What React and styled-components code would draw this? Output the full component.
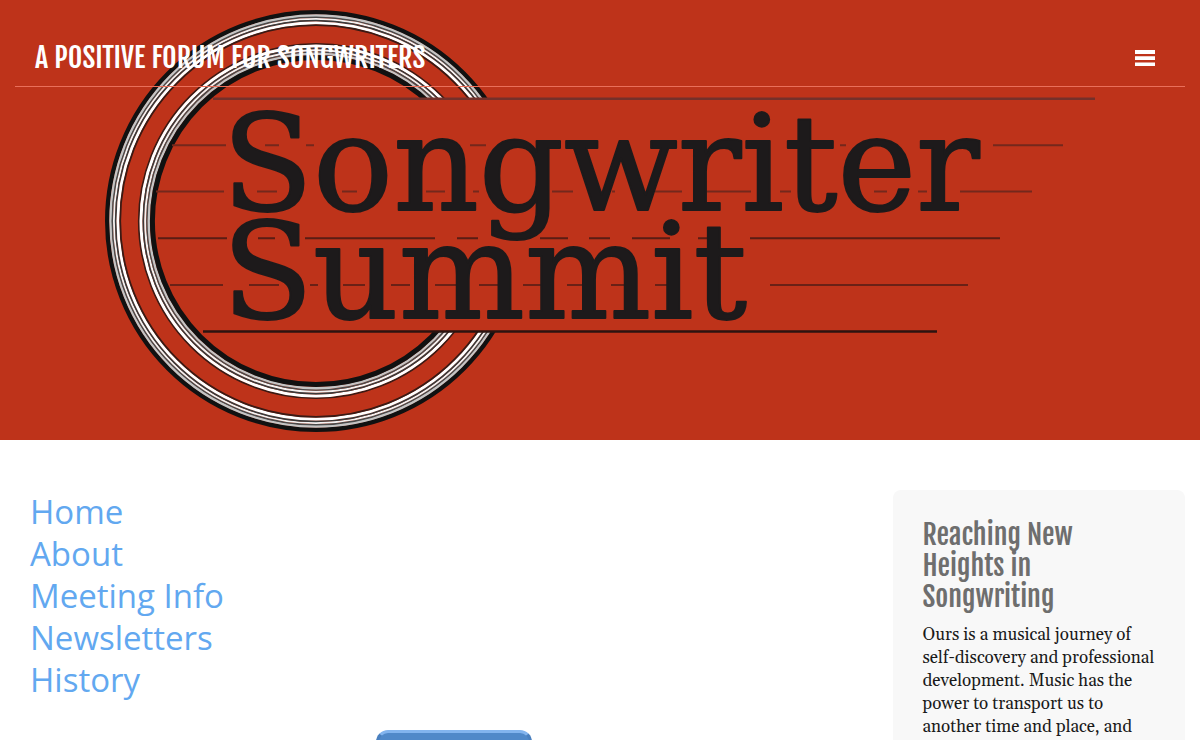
import React from 'react'
import styled, { createGlobalStyle } from 'styled-components'

const GlobalStyle = createGlobalStyle`
  * {
    box-sizing: border-box;
  }
  body {
    margin: 0;
    background: #fff;
    font-family: Gelasio, Georgia, "Liberation Serif", serif;
  }
`

const Hero = styled.header`
  display: grid;
  background: #be331a;
`

const Logo = styled.svg`
  grid-area: 1 / 1;
  display: block;
  width: 100%;
  height: auto;
`

const LogoText = styled.text`
  font-family: "DejaVu Serif", serif;
  font-size: 133px;
  fill: #1d1a1b;
  stroke: #1d1a1b;
  stroke-width: 2px;
  stroke-linejoin: round;
`

const TopBar = styled.div`
  grid-area: 1 / 1;
  align-self: start;
  display: flex;
  justify-content: space-between;
  align-items: center;
  margin: 0 15px;
  padding: 29px 20px 0;
  height: 87px;
  border-bottom: 1px solid #ea6f5a;
`

const Title = styled.h1`
  margin: 0;
  font-family: "Fjalla One", "Roboto Condensed", "Liberation Sans Narrow", sans-serif;
  font-size: 28px;
  line-height: 36px;
  font-weight: 400;
  text-transform: uppercase;
  white-space: nowrap;
  color: #fff;
`

const MenuButton = styled.button`
  display: block;
  padding: 10px;
  border: 0;
  background: none;
  color: #fff;
  cursor: pointer;

  svg {
    display: block;
  }
`

const Main = styled.main`
  display: grid;
  grid-template-columns: minmax(0, 3fr) minmax(0, 1fr);
  padding: 50px 15px 0;
`

const Content = styled.div`
  display: flex;
  flex-direction: column;
  padding: 0 15px;
`

const Menu = styled.nav`
  display: flex;
  flex-direction: column;
  align-items: flex-start;
  padding-top: 1px;
`

const MenuLink = styled.a`
  font-family: "Segoe UI", "Open Sans", "Noto Sans", sans-serif;
  font-size: 33px;
  line-height: 42px;
  color: #62a8f0;
  text-decoration: none;
`

const JoinButton = styled.button`
  align-self: center;
  width: 156px;
  height: 44px;
  margin-top: 29px;
  border: 3px solid #4a80bf;
  border-top-color: #82b4ee;
  border-radius: 12px;
  background: #5089c9;
  cursor: pointer;
`

const Aside = styled.aside`
  padding: 29px 30px 30px;
  border-radius: 8px;
  background: #f8f8f8;
`

const AsideTitle = styled.h2`
  margin: 0 0 12px;
  font-family: "Fjalla One", "Roboto Condensed", "Liberation Sans Narrow", sans-serif;
  font-size: 28px;
  line-height: 31px;
  font-weight: 400;
  color: #6e6e6e;
`

const AsideText = styled.p`
  margin: 0;
  font-size: 17px;
  line-height: 23px;
  color: #1a1a1a;
`

const links = [
  { name: "Home", href: "#home" },
  { name: "About", href: "#about" },
  { name: "Meeting Info", href: "#meeting-info" },
  { name: "Newsletters", href: "#newsletters" },
  { name: "History", href: "#history" },
]

// guitar rosette, from the outer edge to the inner one
const rings = [
  { r: 208.8, width: 4.4, color: "#111" },
  { r: 205.4, width: 2.6, color: "#c4c4c4" },
  { r: 203.7, width: 1.6, color: "#4a4a4a" },
  { r: 202, width: 2, color: "#f2f2f2" },
  { r: 200.3, width: 1.8, color: "#3a3a3a" },
  { r: 198, width: 3, color: "#fff" },
  { r: 195.8, width: 1.8, color: "#3a1a14" },
  { r: 177.2, width: 1.8, color: "#3a1a14" },
  { r: 175, width: 3, color: "#fff" },
  { r: 172.6, width: 1.8, color: "#3a3a3a" },
  { r: 170.8, width: 2, color: "#f2f2f2" },
  { r: 169, width: 1.6, color: "#4a4a4a" },
  { r: 167.2, width: 2.4, color: "#c4c4c4" },
  { r: 163.6, width: 5, color: "#111" },
]

const strings = [
  { color: "#74302a", width: 2.4, d: "M213 98.8H1095" },
  { color: "#74281c", width: 2, d: "M172 145.3H226M265 145.3H279M306 145.3H314M470 145.3H486M840 145.3H846M993 145.3H1063" },
  { color: "#74281c", width: 2, d: "M156 191.5H224M257 191.5H277M342 191.5H357M426 191.5H445M473 191.5H479M552 191.5H573M612 191.5H615M655 191.5H682M707 191.5H751M780 191.5H791M874 191.5H887M918 191.5H927M960 191.5H1032" },
  { color: "#5a1d14", width: 2, d: "M158 238.3H227M258 238.3H275M305 238.3H435M457 238.3H478M540 238.3H568M589 238.3H610M632 238.3H670M698 238.3H713M750 238.3H1000" },
  { color: "#6a2116", width: 2, d: "M170 285H223M249 285H279M310 285H318M343 285H365M391 285H410M435 285H457M479 285H500M523 285H545M567 285H586M611 285H632M655 285H673M770 285H968" },
  { color: "#2c1411", width: 2.6, d: "M203 331.5H937" },
]

const App = () => {
  return (
    <>
      <GlobalStyle />
      <Hero>
        <Logo viewBox="0 0 1200 440">
          <clipPath id="rosette">
            <path d="M0 0H1200V98H316V332H1200V440H0z" />
          </clipPath>
          <g fill="none" clipPath="url(#rosette)">
            {rings.map((ring) => (
              <circle key={ring.r} cx="316" cy="221" r={ring.r} stroke={ring.color} strokeWidth={ring.width} />
            ))}
          </g>
          {strings.map((string) => (
            <path key={string.d} d={string.d} stroke={string.color} strokeWidth={string.width} />
          ))}
          <LogoText x="222" y="210">Songwriter</LogoText>
          <LogoText x="222" y="318">Summit</LogoText>
        </Logo>
        <TopBar>
          <Title>A Positive Forum for Songwriters</Title>
          <MenuButton aria-label="Menu">
            <svg width="20" height="16" viewBox="0 0 20 16" fill="currentColor">
              <path d="M0 0h20v4H0zM0 6.3h20v3.7H0zM0 12.5h20v3.5H0z" />
            </svg>
          </MenuButton>
        </TopBar>
      </Hero>
      <Main>
        <Content>
          <Menu>
            {links.map((link) => (
              <MenuLink key={link.href} href={link.href}>{link.name}</MenuLink>
            ))}
          </Menu>
          <JoinButton aria-label="Join" />
        </Content>
        <Aside>
          <AsideTitle>Reaching New Heights in Songwriting</AsideTitle>
          <AsideText>
            Ours is a musical journey of self-discovery and professional
            development. Music has the power to transport us to another time and place, and
          </AsideText>
        </Aside>
      </Main>
    </>
  )
}

export default App
